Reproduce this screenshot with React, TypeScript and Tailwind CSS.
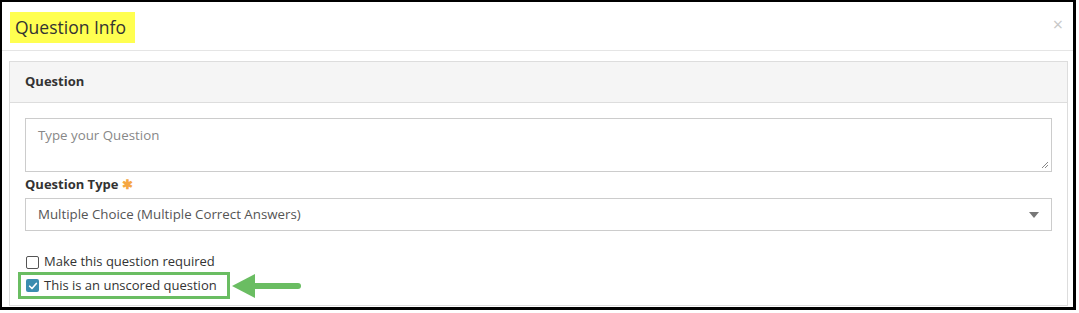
import React from 'react';

function CheckBox({ checked }: { checked?: boolean }) {
  if (checked) {
    return (
      <span className="flex h-[13px] w-[13px] shrink-0 items-center justify-center rounded-[2px] bg-[#3b8db0]">
        <svg viewBox="0 0 12 12" className="h-[10px] w-[10px]">
          <path d="M2 6.3 4.8 9 10 3" fill="none" stroke="#fff" strokeWidth="2" strokeLinecap="round" strokeLinejoin="round" />
        </svg>
      </span>
    );
  }
  return <span className="h-[13px] w-[13px] shrink-0 rounded-[2px] border border-[#555] bg-white" />;
}

export default function App() {
  return (
    <div className="h-[313px] w-[1079px] bg-white font-['Open_Sans',sans-serif] text-[#333]">
      <div className="flex h-[310px] w-[1076px] flex-col border-b-[3px] border-l-2 border-r-[3px] border-t-2 border-black">
        <div className="flex h-[49px] shrink-0 items-start justify-between border-b border-[#e5e5e5]">
          <div className="ml-[8px] mt-[10px] flex h-[31px] items-center bg-[#ffff50] pl-[5px] pr-[9px] text-[17.5px] leading-none">
            Question Info
          </div>
          <span className="mr-[10px] mt-[13px] text-[18px] leading-none text-[#c8c8c8]">×</span>
        </div>

        <div className="ml-[7px] mr-[5px] mt-[10px] shrink-0 border border-[#ddd]">
          <div className="flex h-[41px] items-center border-b border-[#ddd] bg-[#f5f5f5] px-[15px] text-[13px] font-bold">
            Question
          </div>
          <div className="flex flex-col px-[15px] pb-[6px] pt-[15px]">
            <div className="relative h-[54px] border border-[#ccc] px-[12px] pt-[7px] text-[13.3px] text-[#888]">
              Type your Question
              <svg viewBox="0 0 8 8" className="absolute bottom-[2px] right-[2px] h-[8px] w-[8px]">
                <path d="M7 1 1 7M7 4 4 7" stroke="#888" strokeWidth="1" />
              </svg>
            </div>
            <div className="mt-[2px] flex h-[21px] items-center text-[13px] font-bold">
              Question Type
              <span className="ml-[4px] text-[13px] text-[#f5a742]">✱</span>
            </div>
            <div className="mt-[3px] flex h-[33px] items-center justify-between border border-[#ccc] pl-[12px] pr-[12px] text-[13.3px] text-[#555]">
              Multiple Choice (Multiple Correct Answers)
              <svg viewBox="0 0 10 6" className="h-[6px] w-[10px]">
                <path d="M0 0h10L5 6z" fill="#777" />
              </svg>
            </div>
            <div className="mt-[21px] flex h-[20px] items-center gap-[5px] pl-[1px] text-[13px]">
              <CheckBox />
              Make this question required
            </div>
            <div className="flex items-center">
              <div className="-ml-[7px] flex h-[27px] w-[212px] items-center gap-[5px] border-[3px] border-[#6abd62] pl-[5px] text-[13px]">
                <CheckBox checked />
                This is an unscored question
              </div>
              <svg viewBox="0 0 70 26" className="ml-[2px] h-[26px] w-[70px]">
                <path d="M0 13 23 1v24z" fill="#6abd62" />
                <path d="M22 13h44" stroke="#6abd62" strokeWidth="6" strokeLinecap="round" />
              </svg>
            </div>
          </div>
        </div>
      </div>
    </div>
  );
}
